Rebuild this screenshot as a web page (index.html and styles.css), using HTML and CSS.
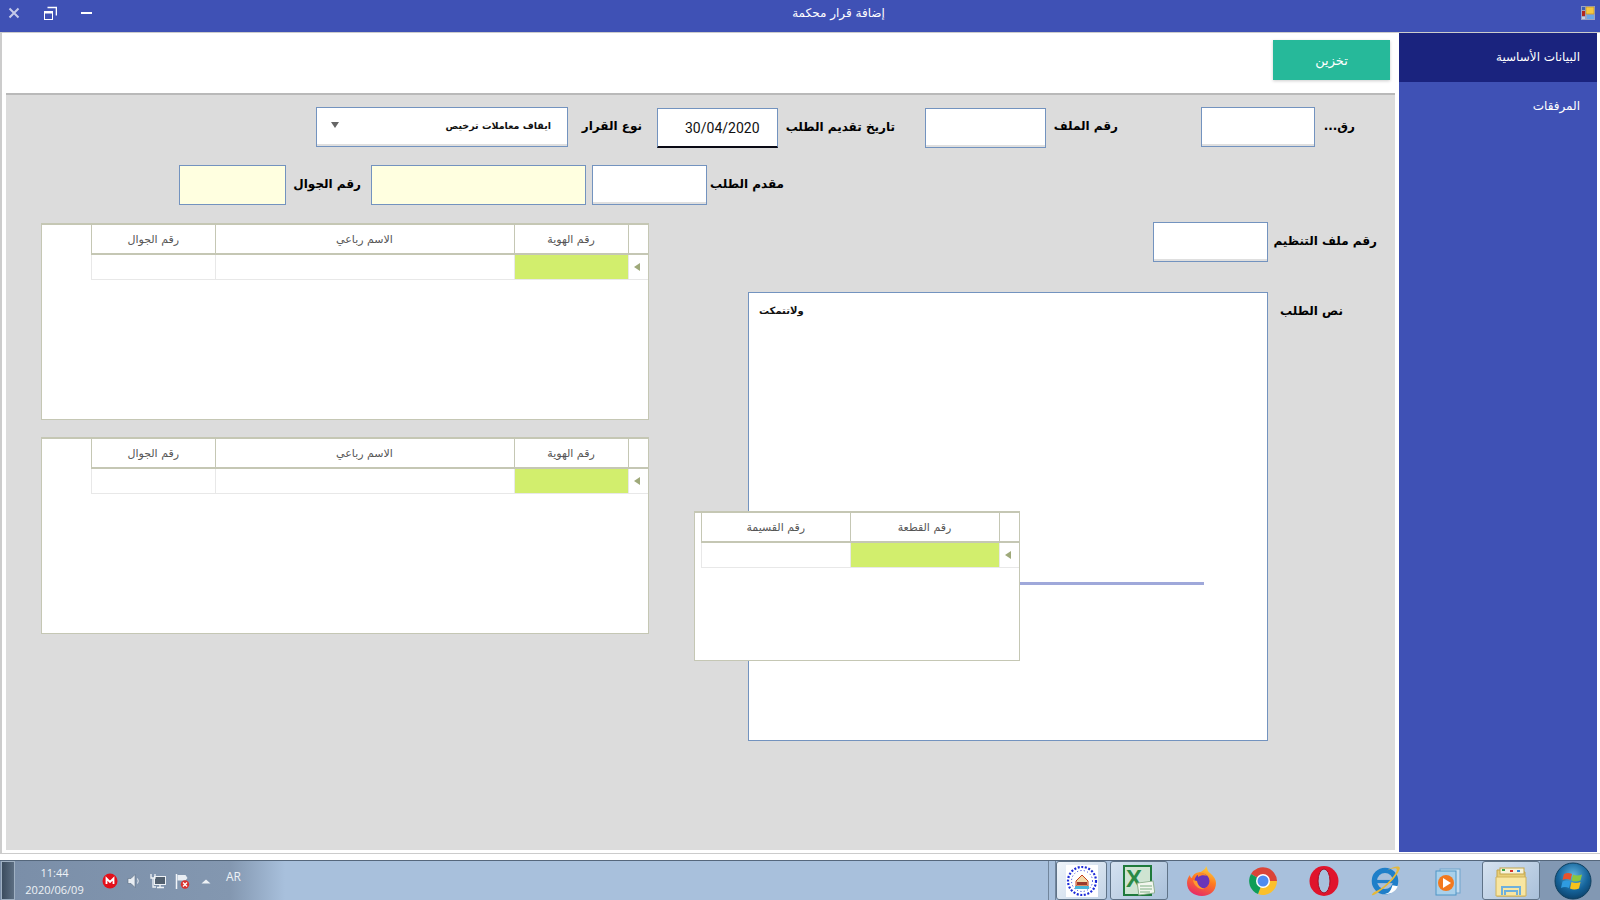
FILE: index.html
```html
<!DOCTYPE html>
<html lang="ar" dir="rtl">

<head>
    <meta charset="UTF-8" />
    <meta name="viewport" content="width=device-width, initial-scale=1.0" />
    <title>إضافة قرار محكمة</title>
    <link rel="stylesheet" href="styles.css">
</head>

<body>
    <div class="title-bar">
        <svg class="app-icon" width="14" height="14" viewBox="0 0 14 14">
            <rect width="14" height="14" fill="#9aa3c4" />
            <rect x="1" y="1" width="3" height="3" fill="#3f5fb0" />
            <rect x="5" y="1" width="8" height="7" fill="#f5c842" stroke="#b98a1c" stroke-width="0.6" />
            <rect x="1" y="5" width="3" height="5" fill="#b3261e" />
            <rect x="6" y="9" width="7" height="4" fill="#6aa5e8" />
            <rect x="1" y="11" width="3" height="2" fill="#c9cfe0" />
        </svg>
        <div class="window-title">إضافة قرار محكمة</div>
        <div class="window-controls">
            <svg width="11" height="14" viewBox="0 0 11 14"><rect y="6" width="11" height="2" fill="#fff" /></svg>
            <svg width="13" height="14" viewBox="0 0 13 14" fill="none" stroke="#fff">
                <path d="M3.5 1.5h9v8" stroke-width="1.6" />
                <rect x="0.5" y="5.5" width="8" height="8" />
                <path d="M0.5 6.5h8" stroke-width="2" />
            </svg>
            <svg width="12" height="14" viewBox="0 0 12 14" stroke="#c5cae9" stroke-width="2">
                <path d="M1.5 2.5l9 9M10.5 2.5l-9 9" />
            </svg>
        </div>
    </div>

    <div class="window">
        <div class="sidebar">
            <div class="side-item active">البيانات الأساسية</div>
            <div class="side-item">المرفقات</div>
        </div>

        <div class="main">
            <div class="toolbar">
                <button class="save-btn">تخزين</button>
            </div>

            <div class="panel">
                <div class="form-row row-one">
                    <label class="lbl lbl-cut">رق...</label>
                    <input class="box box-s" type="text" />
                    <label class="lbl lbl-file">رقم الملف</label>
                    <input class="box box-m low" type="text" />
                    <label class="lbl lbl-date">تاريخ تقديم الطلب</label>
                    <input class="box box-date low" type="text" value="30/04/2020" />
                    <label class="lbl lbl-type">نوع القرار</label>
                    <div class="combo">
                        <span>ايقاف معاملات ترخيص</span>
                        <i class="combo-arrow"></i>
                    </div>
                </div>

                <div class="form-row row-two">
                    <label class="lbl lbl-applicant">مقدم الطلب</label>
                    <input class="box box-l" type="text" />
                    <input class="box box-yellow-l" type="text" />
                    <label class="lbl lbl-mobile">رقم الجوال</label>
                    <input class="box box-yellow-s" type="text" />
                </div>

                <div class="lower">
                    <div class="right-col">
                        <div class="form-row">
                            <label class="lbl lbl-org">رقم ملف التنظيم</label>
                            <input class="box box-l" type="text" />
                        </div>
                        <div class="memo-row">
                            <label class="lbl lbl-memo">نص الطلب</label>
                            <div class="memo">
                                <div class="memo-text">ولاتتمكت</div>
                                <div class="memo-line"></div>
                                <div class="grid grid-plot">
                                    <table>
                                        <tr class="head">
                                            <th class="c-ind"></th>
                                            <th class="c-plot">رقم القطعة</th>
                                            <th>رقم القسيمة</th>
                                        </tr>
                                        <tr>
                                            <td class="c-ind"><i class="row-arrow"></i></td>
                                            <td class="cell-on"></td>
                                            <td></td>
                                        </tr>
                                    </table>
                                </div>
                            </div>
                        </div>
                    </div>

                    <div class="left-col">
                        <div class="grid">
                            <table>
                                <tr class="head">
                                    <th class="c-ind"></th>
                                    <th class="c-id">رقم الهوية</th>
                                    <th class="c-name">الاسم رباعي</th>
                                    <th>رقم الجوال</th>
                                </tr>
                                <tr>
                                    <td class="c-ind"><i class="row-arrow"></i></td>
                                    <td class="cell-on"></td>
                                    <td></td>
                                    <td></td>
                                </tr>
                            </table>
                        </div>
                        <div class="grid">
                            <table>
                                <tr class="head">
                                    <th class="c-ind"></th>
                                    <th class="c-id">رقم الهوية</th>
                                    <th class="c-name">الاسم رباعي</th>
                                    <th>رقم الجوال</th>
                                </tr>
                                <tr>
                                    <td class="c-ind"><i class="row-arrow"></i></td>
                                    <td class="cell-on"></td>
                                    <td></td>
                                    <td></td>
                                </tr>
                            </table>
                        </div>
                    </div>
                </div>
            </div>
        </div>
    </div>

    <!-- Windows taskbar -->
    <div class="taskbar" dir="ltr">
        <div class="show-desktop"></div>
        <div class="clock">
            <div>11:44</div>
            <div>2020/06/09</div>
        </div>
        <div class="tray">
            <svg width="16" height="16" viewBox="0 0 16 16">
                <circle cx="8" cy="8" r="7.5" fill="#e3101b" />
                <path d="M4.5 11V5.5L8 9l3.5-3.5V11" fill="none" stroke="#fff" stroke-width="1.8" />
            </svg>
            <svg width="16" height="16" viewBox="0 0 16 16">
                <path d="M2 5.5h3L9 1.5v13l-4-4H2z" fill="#e8edf3" stroke="#5d6d80" stroke-width="0.6" />
                <path d="M11.5 5.5q1.5 2.5 0 5" fill="none" stroke="#e8edf3" />
            </svg>
            <svg width="16" height="16" viewBox="0 0 16 16">
                <rect x="4.5" y="3.5" width="11" height="8" fill="#52606f" stroke="#eef2f6" />
                <path d="M7 14.5h7M10 12v2" stroke="#eef2f6" stroke-width="1.4" />
                <path d="M1 1v4h4V1M3 5v9h3" fill="none" stroke="#eef2f6" stroke-width="1.3" />
            </svg>
            <svg width="16" height="16" viewBox="0 0 16 16">
                <path d="M2.5 1v15" stroke="#f1f4f8" stroke-width="1.5" />
                <path d="M3.5 2h8l2 3-2 2.5h-8z" fill="#e8edf3" />
                <circle cx="11" cy="11.5" r="4.2" fill="#d9322e" />
                <path d="M9 9.5l4 4M13 9.5l-4 4" stroke="#fff" stroke-width="1.3" />
            </svg>
            <svg width="16" height="16" viewBox="0 0 16 16">
                <path d="M3.5 10.5L8 6.5l4.5 4z" fill="#eef2f6" />
            </svg>
            <span class="lang">AR</span>
        </div>

        <div class="apps">
            <div class="stack-edge"></div>
            <div class="task-btn active-btn">
                <svg width="32" height="32" viewBox="0 0 32 32">
                    <rect width="32" height="32" fill="#fff" />
                    <circle cx="16" cy="16" r="14" fill="none" stroke="#1c2bd8" stroke-width="2.2" stroke-dasharray="2 1.6" />
                    <circle cx="16" cy="16" r="10.5" fill="none" stroke="#1c2bd8" stroke-width="1" stroke-dasharray="1 2.4" />
                    <path d="M10 16l6-6 6 6v5H10z" fill="#f2d9a8" stroke="#c8401e" />
                    <rect x="9" y="21" width="14" height="3" fill="#49b6d8" />
                    <rect x="11" y="17" width="10" height="3" fill="#9c3a2c" />
                </svg>
            </div>
            <div class="task-btn excel-btn">
                <svg width="32" height="32" viewBox="0 0 32 32">
                    <rect x="1" y="1" width="27" height="29" fill="#cfe4d2" stroke="#1f7a3c" stroke-width="2" />
                    <text x="3" y="22" class="excel-x">X</text>
                    <rect x="15" y="17" width="16" height="12" fill="#f2f6ee" stroke="#8fb08f" transform="rotate(-8 23 23)" />
                    <path d="M17 21h12M17 24h12M17 27h10" stroke="#7fae84" />
                </svg>
            </div>
            <div class="slot">
                <svg width="32" height="32" viewBox="0 0 32 32">
                    <defs>
                        <linearGradient id="foxFill" x1="0.7" y1="0" x2="0.3" y2="1">
                            <stop offset="0" stop-color="#ffd43b" />
                            <stop offset="0.45" stop-color="#ff7a1f" />
                            <stop offset="1" stop-color="#e6266b" />
                        </linearGradient>
                    </defs>
                    <path d="M20 1c2 3 1 5 4 7 4 3 6 7 6 10 0 8-6 13-14 13S1 26 1 18c0-3 1-6 3-8 0 2 1 3 2 3 1-4 5-6 9-6 2-2 5-3 5-6z" fill="url(#foxFill)" />
                    <circle cx="16" cy="16" r="7.5" fill="#6a35b8" />
                    <path d="M7 15c1 6 6 10 12 9-4-1-7-3-8-8z" fill="#ff9a2e" />
                    <path d="M12 9c3-2 7-1 9 2-3-1-6-1-9 1z" fill="#ff8a25" />
                </svg>
            </div>
            <div class="slot">
                <svg width="32" height="32" viewBox="0 0 32 32">
                    <path d="M16 16L4 9.1A14 14 0 0 1 30 16H16z" fill="#db4437" />
                    <path d="M16 16L30 16A14 14 0 0 1 11 29.1z" fill="#fbc02d" />
                    <path d="M16 16L11 29.1A14 14 0 0 1 4 9.1z" fill="#0f9d58" />
                    <circle cx="16" cy="16" r="7" fill="#fff" />
                    <circle cx="16" cy="16" r="5.5" fill="#4f8bf0" />
                </svg>
            </div>
            <div class="slot">
                <svg width="32" height="32" viewBox="0 0 32 32">
                    <ellipse cx="16" cy="16" rx="14.5" ry="15" fill="#e0142c" />
                    <ellipse cx="16" cy="16" rx="6" ry="12" fill="#a8c0dc" stroke="#a80c22" />
                </svg>
            </div>
            <div class="slot">
                <svg width="36" height="34" viewBox="0 0 32 32">
                    <circle cx="16" cy="16" r="10" fill="none" stroke="#1f7fc9" stroke-width="5" />
                    <path d="M7 15h18v3H7z" fill="#1f7fc9" />
                    <path d="M23 20l5 1c-2 5-7 8-12 7 4 0 6-4 7-8z" fill="#fff" />
                    <path d="M5 27C1 31 6 30 12 25 20 20 29 9 30 4c0-3-6-2-12 2 5-2 10-3 9 0-1 4-9 13-15 17-3 2-6 3-7 4z" fill="#e5b83a" />
                </svg>
            </div>
            <div class="slot wmp-slot">
                <svg width="30" height="30" viewBox="0 0 30 30">
                    <rect x="6" y="3" width="20" height="24" fill="#c5dcef" stroke="#6ea3cc" />
                    <rect x="2" y="5" width="20" height="24" fill="#a9d0ea" stroke="#4f95c6" />
                    <circle cx="12" cy="17" r="8" fill="#f2791e" />
                    <path d="M9 12l8 5-8 5z" fill="#fff" />
                </svg>
            </div>
            <div class="task-btn folder-btn">
                <svg width="32" height="32" viewBox="0 0 32 32">
                    <path d="M2 5h10l2 2h16v24H2z" fill="#e9cf78" stroke="#c4a54a" />
                    <rect x="5" y="3" width="24" height="6" fill="#f7f3da" stroke="#c4a54a" />
                    <rect x="7" y="4" width="3" height="2" fill="#3aa648" />
                    <rect x="15" y="5" width="3" height="2" fill="#d8322c" />
                    <rect x="22" y="5" width="3" height="2" fill="#2f86d6" />
                    <path d="M1 12h30v19H1z" fill="#f8e6a2" stroke="#cfb25a" />
                    <path d="M7 30v-8h18v8M10 30v-4h12v4" fill="none" stroke="#6eb0dc" stroke-width="2" />
                </svg>
            </div>
            <div class="start-area">
                <svg width="38" height="38" viewBox="0 0 38 38">
                    <defs>
                        <radialGradient id="orbFill" cx="0.5" cy="0.35" r="0.7">
                            <stop offset="0" stop-color="#5fb3e0" />
                            <stop offset="0.6" stop-color="#15639a" />
                            <stop offset="1" stop-color="#0b3c63" />
                        </radialGradient>
                    </defs>
                    <circle cx="19" cy="19" r="18" fill="url(#orbFill)" stroke="#10405f" />
                    <path d="M10 12q4-2 8 0l-1.5 6q-4-2-8 0z" fill="#e8522c" />
                    <path d="M19 12.5q4 2 9 0l-1.5 6q-5 2-9 0z" fill="#8bc63f" />
                    <path d="M8.5 19.5q4-2 8 0L15 26q-4-2-8 0z" fill="#2f9be0" />
                    <path d="M17.5 20q4 2 9 0L25 26.5q-5 2-9 0z" fill="#f8c21c" />
                </svg>
            </div>
        </div>
    </div>
</body>

</html>
```

FILE: styles.css
```css
* {
    box-sizing: border-box;
}

body {
    margin: 0;
    width: 1600px;
    height: 900px;
    overflow: hidden;
    background: white;
    font-family: "DejaVu Sans", sans-serif;
    display: flex;
    flex-direction: column;
}

.title-bar {
    height: 33px;
    flex-shrink: 0;
    background: #3f51b5;
    border-bottom: 1px solid #ccc;
    display: flex;
    align-items: center;
    padding: 0 5px 6px 8px;
    color: white;
}

.window-title {
    margin: 0 auto;
    padding-left: 4px;
    font-size: 12px;
}

.window-controls {
    display: flex;
    align-items: center;
    gap: 24px;
}

.window {
    height: 821px;
    flex-shrink: 0;
    margin-bottom: 6px;
    display: flex;
    border-left: 2px solid #ccc;
    border-bottom: 1px solid #ccc;
    padding-right: 3px;
}

.sidebar {
    width: 198px;
    flex-shrink: 0;
    margin-bottom: 1px;
    background: #3f51b5;
    color: white;
    font-size: 12px;
}

.side-item {
    height: 49px;
    line-height: 48px;
    padding-right: 17px;
}

.side-item.active {
    background: #1a237e;
}

.main {
    flex: 1;
    display: flex;
    flex-direction: column;
    min-width: 0;
}

.toolbar {
    height: 60px;
    flex-shrink: 0;
    padding: 7px 9px 0 0;
}

.save-btn {
    display: block;
    width: 117px;
    height: 40px;
    border: none;
    background: #26b99a;
    color: white;
    font-family: inherit;
    font-size: 13px;
    box-shadow: 0 1px 3px rgba(0, 0, 0, 0.2);
}

.panel {
    flex: 1;
    margin: 0 4px 3px 4px;
    background: #dcdcdc;
    border-top: 2px solid #b9b9b9;
    padding: 12px 18px 0 35px;
}

.form-row {
    display: flex;
    align-items: flex-start;
}

.row-one {
    height: 41px;
    padding-right: 22px;
}

.row-two {
    margin-top: 17px;
    height: 40px;
    padding-right: 22px;
}

.lbl {
    height: 40px;
    line-height: 39px;
    font-size: 12px;
    font-weight: bold;
    color: #000;
    white-space: nowrap;
    flex-shrink: 0;
}

.lbl-cut { width: 40px; }
.lbl-file { width: 155px; padding-right: 83px; }
.lbl-date { width: 147px; padding-right: 30px; margin-top: 1px; }
.lbl-type { width: 89px; padding-right: 15px; }
.lbl-applicant { width: 648px; padding-right: 571px; }
.lbl-mobile { width: 85px; padding-right: 10px; }
.lbl-org { width: 109px; }
.lbl-memo { width: 109px; padding-right: 34px; height: 36px; line-height: 38px; }

.box {
    height: 40px;
    border: 1px solid #7393bf;
    background: white;
    box-shadow: inset 0 -2px 0 #dfdfdf;
    padding: 0 16px 0 0;
    margin: 0;
    outline: none;
    flex-shrink: 0;
    font-family: Roboto, sans-serif;
    font-size: 14px;
    color: #111;
}

.low {
    margin-top: 1px;
}

.box-s { width: 114px; }
.box-l { width: 115px; }
.box-m { width: 121px; }

.box-date {
    width: 121px;
    border-bottom: 2px solid #0a0a14;
    box-shadow: none;
    text-align: left;
    padding: 0 0 0 27px;
    direction: ltr;
}

.box-yellow-l {
    width: 215px;
    margin-right: 6px;
    background: #ffffe0;
    box-shadow: none;
}

.box-yellow-s {
    width: 107px;
    background: #ffffe0;
    box-shadow: none;
}

.combo {
    width: 252px;
    height: 40px;
    border: 1px solid #7393bf;
    background: white;
    box-shadow: inset 0 -2px 0 #dfdfdf;
    padding: 0 16px 4px 14px;
    display: flex;
    align-items: center;
    justify-content: space-between;
    font-size: 9.5px;
    font-weight: bold;
    color: #111;
}

.combo-arrow {
    border-top: 6px solid #666;
    border-left: 4px solid transparent;
    border-right: 4px solid transparent;
}

.lower {
    margin-top: 17px;
    display: flex;
    justify-content: space-between;
}

.right-col {
    width: 629px;
}

.memo-row {
    margin-top: 30px;
    display: flex;
    align-items: flex-start;
}

.memo {
    position: relative;
    width: 520px;
    height: 449px;
    border: 1px solid #7393bf;
    background: white;
}

.memo-text {
    width: max-content;
    margin: 0 auto 0 0;
    padding: 12px 0 0 10px;
    font-size: 10px;
    font-weight: bold;
    color: #111;
}

.memo-line {
    position: absolute;
    left: 271px;
    top: 289px;
    width: 184px;
    height: 3px;
    background: #9fa8da;
}

.left-col {
    margin-top: 1px;
    width: 608px;
    display: flex;
    flex-direction: column;
    gap: 17px;
}

.grid {
    width: 608px;
    height: 197px;
    background: white;
    border: 1px solid #c5c7b4;
    border-top-width: 2px;
}

.grid table {
    width: 557px;
    table-layout: fixed;
    border-collapse: collapse;
    font-size: 11px;
    color: #555;
}

.grid th {
    height: 29px;
    font-weight: normal;
    border: 1px solid #c5c7b4;
    border-top: none;
    border-bottom-width: 2px;
    padding: 0;
}

.grid td {
    height: 25px;
    border: 1px solid #e8e8e8;
    padding: 0;
}

.grid .c-ind {
    width: 20px;
    border-right: none;
}

.c-id { width: 114px; }
.c-name { width: 299px; }

.cell-on {
    background: #d2ee6d;
}

.row-arrow {
    display: block;
    width: 0;
    margin: 0 8px 0 auto;
    border-right: 6px solid #9fa97a;
    border-top: 4px solid transparent;
    border-bottom: 4px solid transparent;
}

.grid-plot {
    position: absolute;
    left: -55px;
    top: 218px;
    width: 326px;
    height: 150px;
}

.grid-plot table {
    width: 318px;
}

.c-plot { width: 149px; }

.taskbar {
    height: 40px;
    flex-shrink: 0;
    display: flex;
    background: linear-gradient(90deg, #7a8ea8 0, #8397b0 230px, #a8c0dc 285px);
    border-top: 1px solid #55677c;
    color: #eef2f6;
    font-family: "Open Sans", sans-serif;
    font-size: 11px;
}

.show-desktop {
    width: 14px;
    margin-left: 1px;
    background: linear-gradient(90deg, #3b4c5e, #5c6e82);
    border: 1px solid #9fb0c2;
}

.clock {
    width: 79px;
    text-align: center;
    line-height: 17px;
    padding-top: 3px;
}

.tray {
    margin-left: 8px;
    display: flex;
    align-items: center;
    gap: 8px;
}

.lang {
    margin: -9px 0 0 4px;
    font-size: 12px;
}

.apps {
    margin-left: auto;
    display: flex;
    align-items: center;
}

.stack-edge {
    width: 8px;
    height: 39px;
    border-left: 1px solid #71859c;
    border-right: 1px solid #71859c;
}

.task-btn {
    height: 39px;
    display: flex;
    align-items: center;
    justify-content: center;
    border: 1px solid #5f7388;
    border-radius: 3px;
    background: linear-gradient(135deg, #d5e2f0, #a9c0da);
}

.active-btn {
    width: 51px;
    background: linear-gradient(135deg, #eef4fa, #c3d4e6);
}

.excel-btn {
    width: 58px;
    margin: 0 3px;
}

.excel-x {
    font-family: "Liberation Sans", sans-serif;
    font-size: 24px;
    font-weight: bold;
    fill: #2a8a45;
}

.slot {
    width: 61px;
    display: flex;
    justify-content: center;
}

.wmp-slot {
    padding-left: 6px;
}

.folder-btn {
    width: 58px;
    margin-left: 6px;
}

.start-area {
    width: 60px;
    height: 39px;
    display: flex;
    align-items: center;
    justify-content: center;
    padding-left: 5px;
    background: #8298b3;
}
```
